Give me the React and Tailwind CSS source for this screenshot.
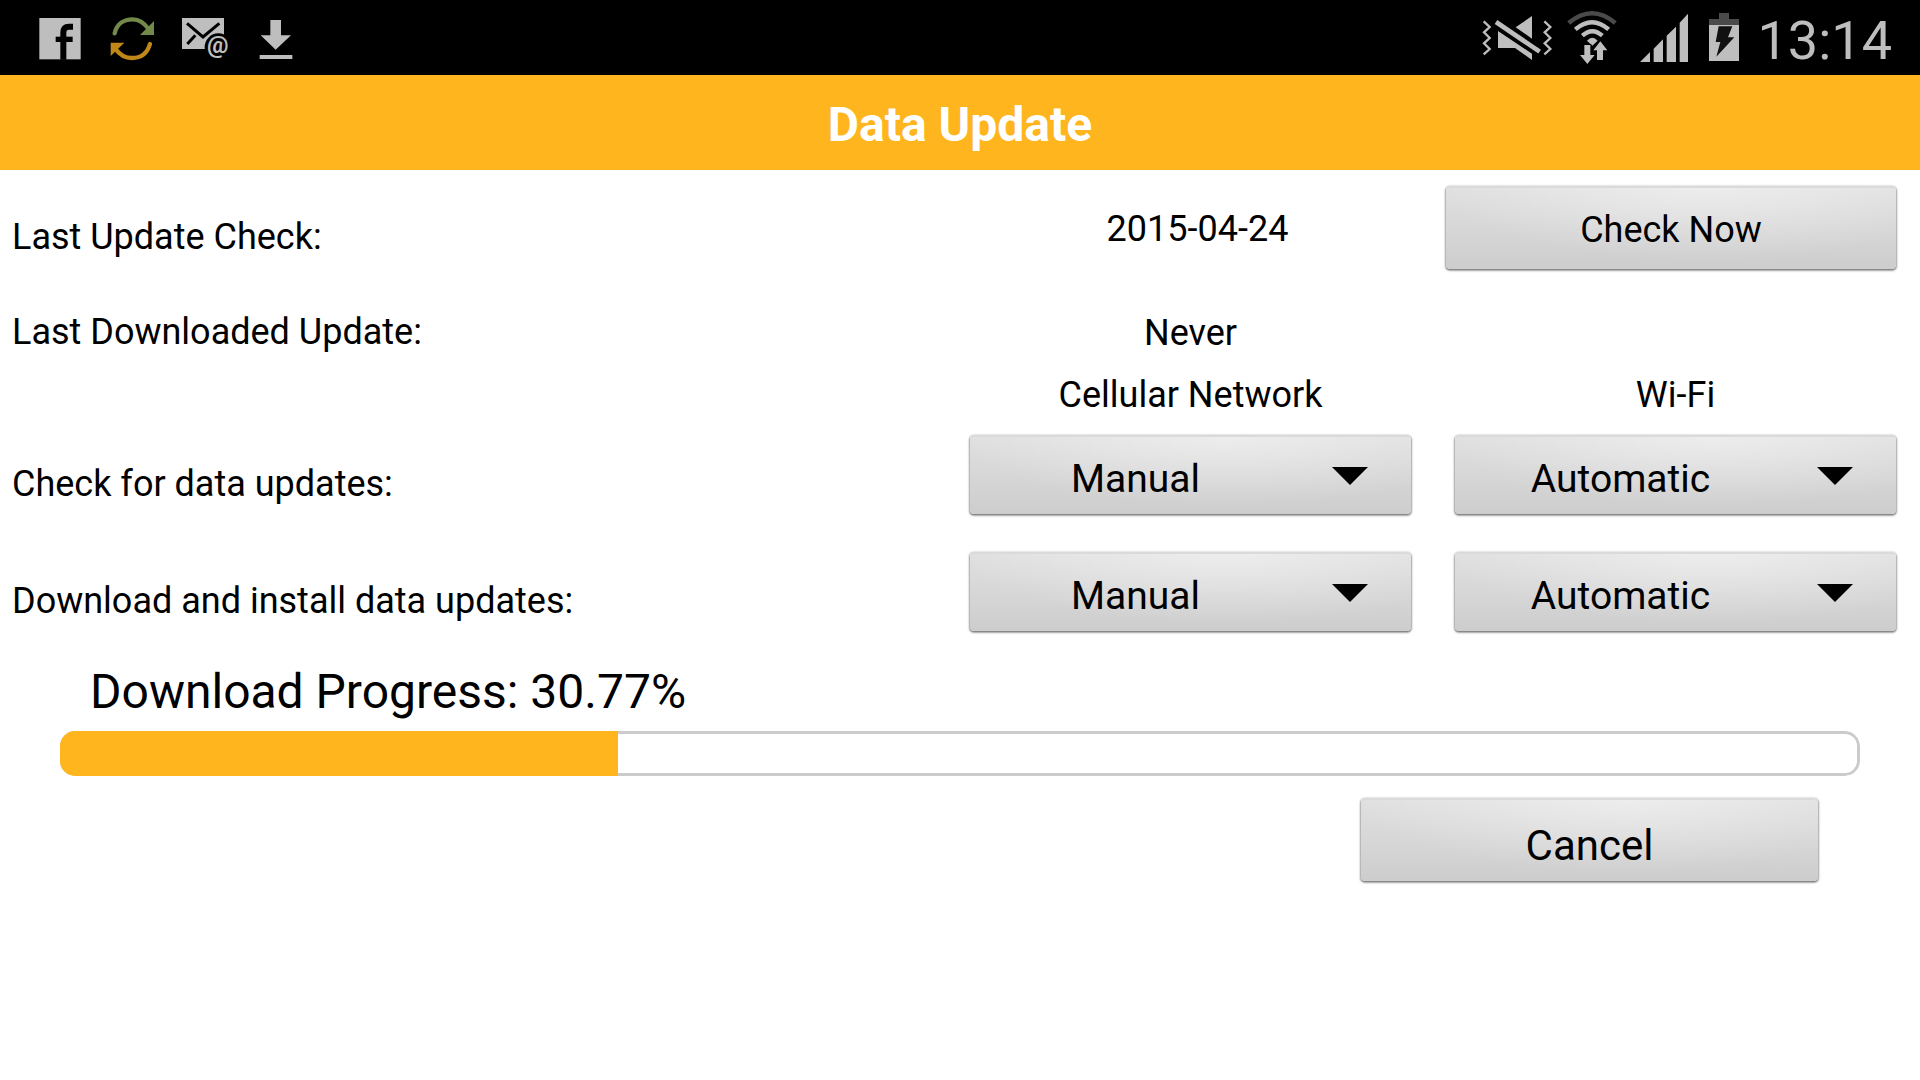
import React, { useState } from "react";

const surface =
  "rounded-[4px] border-t-2 border-[#dadada] bg-[radial-gradient(ellipse_60%_90%_at_58%_0%,rgba(255,255,255,0.42),rgba(255,255,255,0)),linear-gradient(to_bottom,#e0e0e0,#cdcdcd)] shadow-[0_1px_1px_0_#858585,0_1px_2px_1px_rgba(0,0,0,0.35)] text-black";

function FacebookIcon() {
  return (
    <svg viewBox="57 30 126 165" className="h-[55px] w-[42px]" aria-hidden="true">
      <rect x="58" y="54" width="124" height="124" fill="#bebebe" />
      <path d="M130 179V98Q130 80 147 80H159" fill="none" stroke="#000" strokeWidth="18" />
      <path d="M107 118H158" stroke="#000" strokeWidth="16" />
    </svg>
  );
}

function SyncIcon() {
  return (
    <svg viewBox="267 30 135 165" className="h-[55px] w-[45px] overflow-visible" aria-hidden="true">
      <path d="M284 100C290 72 312 58 338 58C358 58 374 70 386 88" fill="none" stroke="#72894a" strokeWidth="13" strokeLinecap="round" />
      <path d="M402 63V105H360Z" fill="#72894a" />
      <path d="M390 132C382 160 362 174 336 174C316 174 298 163 286 146" fill="none" stroke="#c08818" strokeWidth="13" strokeLinecap="round" />
      <path d="M272 128H313L272 168Z" fill="#c08818" />
    </svg>
  );
}

function MailIcon() {
  return (
    <svg viewBox="486 30 141 165" className="h-[55px] w-[47px]" aria-hidden="true">
      <rect x="486" y="54" width="126" height="93" fill="#bebebe" />
      <path d="M501 70L549 111L598 70M502 132L526 106" fill="none" stroke="#000" strokeWidth="9" />
      <ellipse cx="595" cy="142" rx="41" ry="42" fill="#000" />
      <text x="593" y="160" textAnchor="middle" fill="#bebebe" fontSize="72" className="font-[Roboto,sans-serif] font-bold">
        @
      </text>
    </svg>
  );
}

function DownloadIcon() {
  return (
    <svg viewBox="711 30 111 165" className="h-[55px] w-[37px]" aria-hidden="true">
      <path d="M751 60H783V106H813L767 149L722 106H751ZM719 165H817V177H719Z" fill="#bebebe" />
    </svg>
  );
}

function MuteIcon() {
  return (
    <svg viewBox="66 30 207 165" className="h-[55px] w-[69px] overflow-visible" aria-hidden="true">
      <path
        d="M68 64L86 81L69 97L86 114L69 130L86 147L68 163M250 64L268 81L251 97L268 114L251 130L268 147L250 163"
        fill="none"
        stroke="#bebebe"
        strokeWidth="7"
      />
      <path d="M213 48V116L164 82ZM111 93L213 161V180L162 144H111Z" fill="#bebebe" />
      <path d="M105 66L236 155" stroke="#bebebe" strokeWidth="14" />
    </svg>
  );
}

function WifiIcon() {
  return (
    <svg viewBox="318 30 150 165" className="h-[55px] w-[50px]" aria-hidden="true">
      <g fill="none" strokeWidth="13">
        <path d="M323 69Q393 10 463 69" stroke="#4a4a4a" />
        <path d="M343 88Q393 45 443 88" stroke="#bebebe" />
        <path d="M364 107Q394 80 424 107" stroke="#bebebe" />
      </g>
      <path d="M378 122Q394 105 410 122L394 137Z" fill="#bebebe" />
      <path d="M418 124L439 151H426V180H408V151H397Z" fill="#bebebe" stroke="#000" strokeWidth="6" paintOrder="stroke" />
      <path d="M370 135H388V165H401L379 192L357 165H370Z" fill="#bebebe" stroke="#000" strokeWidth="6" paintOrder="stroke" />
    </svg>
  );
}

function SignalIcon() {
  return (
    <svg viewBox="513 30 168 165" className="h-[55px] w-[56px]" aria-hidden="true">
      <path
        d="M537 186L567 156V186ZM578 186V146L606 118V186ZM617 186V107L645 80V186ZM656 186V68L681 41V186Z"
        fill="#bebebe"
      />
    </svg>
  );
}

function BatteryIcon() {
  return (
    <svg viewBox="726 30 108 165" className="h-[55px] w-[36px]" aria-hidden="true">
      <path d="M774 39H804V57H834V75H744V57H774Z" fill="#4a4a4a" />
      <rect x="744" y="75" width="90" height="108" fill="#bebebe" />
      <path d="M773 79H814L801 112H820L766 170L778 126H764Z" fill="#111" />
    </svg>
  );
}

function StatusBar() {
  return (
    <div className="flex h-[75px] items-center justify-between bg-black pl-[39px] pr-7">
      <div className="flex items-center gap-7">
        <FacebookIcon />
        <SyncIcon />
        <MailIcon />
        <DownloadIcon />
      </div>
      <div className="flex items-center gap-[15px]">
        <MuteIcon />
        <WifiIcon />
        <SignalIcon />
        <BatteryIcon />
        <time className="pt-[6px] pl-1 text-[54px] leading-[64px] text-[#bebebe]">13:14</time>
      </div>
    </div>
  );
}

function Picker({ label, initial }) {
  const [value, setValue] = useState(initial);
  return (
    <div className="relative">
      <select
        aria-label={label}
        value={value}
        onChange={(e) => setValue(e.target.value)}
        className={`h-[79px] w-full appearance-none pt-[6px] pr-[110px] text-center text-[39px] leading-[48px] ${surface}`}
      >
        <option>Manual</option>
        <option>Automatic</option>
      </select>
      <div className="pointer-events-none absolute inset-y-0 right-[43px] flex items-center pt-0.5">
        <svg viewBox="0 0 36 18" className="h-[18px] w-9" aria-hidden="true">
          <path d="M0 0H36L18 18Z" fill="#000" />
        </svg>
      </div>
    </div>
  );
}

function SettingRow({ label }) {
  return (
    <>
      <div className="pt-[18px]">{label}</div>
      <Picker label={`${label} Cellular Network`} initial="Manual" />
      <Picker label={`${label} Wi-Fi`} initial="Automatic" />
    </>
  );
}

const columns = "grid grid-cols-[914fr_441fr_441fr] items-center gap-x-11 pl-3 pr-6";

export default function App() {
  const progress = 30.77;
  return (
    <div className="min-h-screen bg-white font-[Roboto,sans-serif] text-[36px] leading-[44px] text-black">
      <StatusBar />
      <header className="flex h-[95px] items-center justify-center bg-[#ffb51e] pt-1">
        <h1 className="text-[48px] leading-[56px] font-bold text-white">Data Update</h1>
      </header>

      <main>
        <div className="grid grid-cols-[937fr_441fr_450fr] items-center gap-x-7 pt-4 pr-6 pl-3">
          <div className="pt-[18px]">Last Update Check:</div>
          <div className="pt-[3px] text-center">2015-04-24</div>
          <button type="button" className={`h-[83px] w-full pt-0.5 ${surface}`}>
            Check Now
          </button>
        </div>

        <div className={`${columns} mt-10`}>
          <div>Last Downloaded Update:</div>
          <div className="pt-0.5 text-center">Never</div>
        </div>

        <div className={`${columns} mt-[18px]`}>
          <div className="col-start-2 text-center">Cellular Network</div>
          <div className="text-center">Wi-Fi</div>
        </div>

        <div className={`${columns} mt-[18px] gap-y-[38px]`}>
          <SettingRow label="Check for data updates:" />
          <SettingRow label="Download and install data updates:" />
        </div>

        <section className="mt-[33px] px-[60px]">
          <div id="progress-label" className="pl-[30px] text-[48px] leading-[56px]">
            Download Progress: {progress}%
          </div>
          <div
            role="progressbar"
            aria-labelledby="progress-label"
            aria-valuenow={progress}
            aria-valuemin={0}
            aria-valuemax={100}
            className="mt-[11px] grid h-[45px] overflow-hidden rounded-[15px]"
          >
            <div className="col-start-1 row-start-1 rounded-[15px] border-[3px] border-[#cbcbcb]" />
            <div
              className="z-10 col-start-1 row-start-1 bg-[#ffb51e]"
              style={{ width: `${Math.ceil(progress)}%` }}
            />
          </div>
          <div className="mt-[22px] flex justify-end pr-[42px]">
            <button type="button" className={`h-[83px] w-[457px] pt-[10px] text-[42px] leading-[48px] ${surface}`}>
              Cancel
            </button>
          </div>
        </section>
      </main>
    </div>
  );
}
